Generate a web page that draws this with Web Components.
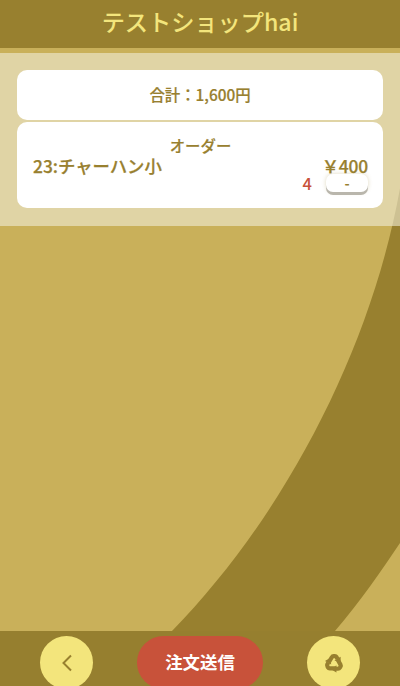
<!DOCTYPE html>
<html lang="ja">
<head>
<meta charset="utf-8">
<title>テストショップhai</title>
<style>
  html, body { margin: 0; padding: 0; height: 100%; background: #c9b05a; }
  body { font-family: "Noto Sans CJK JP", "Noto Sans", sans-serif; overflow: hidden; }
</style>
</head>
<body>
<shop-app>
  <shop-header slot="header">テストショップhai</shop-header>
  <order-panel>
    <total-card>合計：1,600円</total-card>
    <order-card heading="オーダー" name="23:チャーハン小" price="￥400" qty="4"></order-card>
  </order-panel>
  <shop-footer slot="footer"></shop-footer>
</shop-app>

<script>
class ShopApp extends HTMLElement {
    connectedCallback() {
        this.shadow = this.attachShadow({ mode: 'open' });
        this.shadow.innerHTML = `
            <style>
            :host { display: flex; flex-direction: column; width: 400px; height: 686px; position: relative; overflow: hidden; background: #c9b05a; }
            svg { position: absolute; left: 0; top: 0; width: 400px; height: 686px; }
            main { flex: 1; position: relative; min-height: 0; }
            ::slotted(shop-header), ::slotted(shop-footer) { position: relative; }
            </style>
            <!-- big swoosh behind everything -->
            <svg viewBox="0 0 400 686">
              <path d="M403 170 C378 335 290 510 172 631 L335 631 C360 602 382 570 400 543 Z" fill="#98802f"/>
            </svg>
            <slot name="header"></slot>
            <main><slot></slot></main>
            <slot name="footer"></slot>`;
    }
}

class ShopHeader extends HTMLElement {
    connectedCallback() {
        this.shadow = this.attachShadow({ mode: 'open' });
        this.shadow.innerHTML = `
            <style>
            :host { display: block; height: 48px; background: #98802f; border-bottom: 5px solid #c9b05a; color: #f3e57c; text-align: center; font-size: 23.2px; font-weight: 500; line-height: 42px; }
            </style>
            <slot></slot>`;
    }
}

class OrderPanel extends HTMLElement {
    connectedCallback() {
        this.shadow = this.attachShadow({ mode: 'open' });
        this.shadow.innerHTML = `
            <style>
            :host { display: flex; flex-direction: column; gap: 2px; height: 173px; box-sizing: border-box; padding: 17px 17px 0; background: rgba(240, 236, 215, .6); }
            </style>
            <slot></slot>`;
    }
}

class TotalCard extends HTMLElement {
    connectedCallback() {
        this.shadow = this.attachShadow({ mode: 'open' });
        this.shadow.innerHTML = `
            <style>
            :host { display: block; height: 50px; background: #fff; border-radius: 10px; color: #98802f; font-size: 15.4px; font-weight: 500; line-height: 48px; text-align: center; -webkit-text-stroke: .2px #98802f; }
            </style>
            <slot></slot>`;
    }
}

class OrderCard extends HTMLElement {
    connectedCallback() {
        this.shadow = this.attachShadow({ mode: 'open' });
        this.shadow.innerHTML = `
            <style>
            :host { display: block; height: 86px; box-sizing: border-box; padding: 13px 15px 0 16px; background: #fff; border-radius: 10px; color: #98802f; font-weight: 500; }
            .heading { font-size: 15.4px; line-height: 20px; text-align: center; -webkit-text-stroke: .2px #98802f; }
            .row { display: flex; justify-content: space-between; font-size: 17.4px; line-height: 19px; margin-top: 1px; -webkit-text-stroke: .25px #98802f; }
            .price { letter-spacing: -.2px; }
            .qty { display: flex; justify-content: flex-end; align-items: flex-start; gap: 14px; margin-top: -1px; }
            .count { color: #c8523a; font-size: 16.5px; line-height: 18px; }
            button { width: 42px; height: 18px; padding: 0; border: 0; border-radius: 7px; background: #fff; color: #98802f; font: 700 14px/18px "Noto Sans CJK JP", sans-serif; box-shadow: 0 3px 0 #b9b6ac, 0 0 4px rgba(152, 128, 47, .3); }
            </style>
            <div class="heading"></div>
            <div class="row"><span class="name"></span><span class="price"></span></div>
            <div class="qty"><span class="count"></span><button>-</button></div>`;
        this.shadow.querySelector('.heading').textContent = this.getAttribute('heading');
        this.shadow.querySelector('.name').textContent = this.getAttribute('name');
        this.shadow.querySelector('.price').textContent = this.getAttribute('price');
        this.shadow.querySelector('.count').textContent = this.getAttribute('qty');
    }
}

class ShopFooter extends HTMLElement {
    connectedCallback() {
        this.shadow = this.attachShadow({ mode: 'open' });
        this.shadow.innerHTML = `
            <style>
            :host { display: flex; justify-content: space-between; align-items: flex-start; height: 55px; box-sizing: border-box; padding: 5px 40px 0; background: #967f2f; overflow: hidden; }
            .round { display: flex; align-items: center; justify-content: center; flex: none; width: 53px; height: 53px; border-radius: 50%; background: #f3e57c; }
            .send { width: 126px; height: 53px; border-radius: 27px; background: #c8523a; color: #fff; font-size: 17.4px; font-weight: 700; line-height: 52px; text-align: center; }
            svg { display: block; }
            </style>
            <div class="round">
              <svg width="12" height="18" viewBox="0 0 12 18"><path d="M10 1.5 2.5 9 10 16.5" fill="none" stroke="#98802f" stroke-width="2"/></svg>
            </div>
            <div class="send">注文送信</div>
            <div class="round">
              <svg width="20" height="20" viewBox="0 0 20 20">
                <defs>
                  <g id="arm">
                    <path d="M5 9 7.8 4.2Q8.4 3.2 9.6 3.2H10.8Q12 3.2 12.6 4.2L13.6 6" fill="none" stroke="#98802f" stroke-width="4.2"/>
                    <path d="M10.4 7.4 16.6 3.8 16.6 9.6Z" fill="#98802f"/>
                  </g>
                </defs>
                <use href="#arm"/>
                <use href="#arm" transform="rotate(120 10 10.4)"/>
                <use href="#arm" transform="rotate(240 10 10.4)"/>
              </svg>
            </div>`;
    }
}

customElements.define('shop-app', ShopApp);
customElements.define('shop-header', ShopHeader);
customElements.define('order-panel', OrderPanel);
customElements.define('total-card', TotalCard);
customElements.define('order-card', OrderCard);
customElements.define('shop-footer', ShopFooter);
</script>
</body>
</html>
